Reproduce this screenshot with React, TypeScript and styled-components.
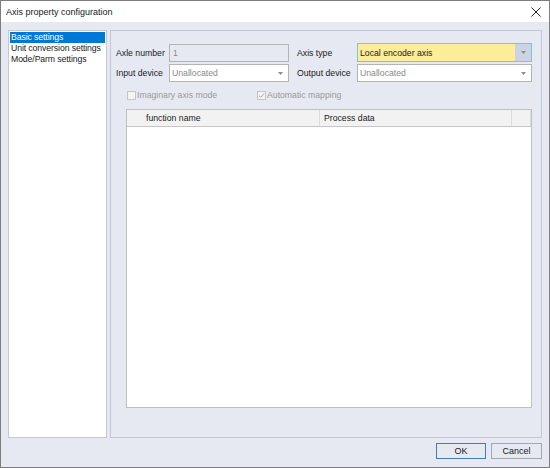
import styled, { createGlobalStyle } from "styled-components"

const Global = createGlobalStyle`
    html, body { margin: 0; padding: 0; background: #ffffff; }
    * { box-sizing: border-box; }
    body {
        font-family: "Liberation Sans", Arial, sans-serif;
        font-size: 8.7px;
        color: #1a1a1a;
    }
`

const Window = styled.div`
    width: 550px;
    height: 468px;
    border: 1px solid #7d7d7d;
    display: flex;
    flex-direction: column;
    background: #e6e9f2;
`

const TitleBar = styled.div`
    height: 21px;
    flex: none;
    background: #ffffff;
    display: flex;
    align-items: center;
    justify-content: space-between;
    padding: 0 7px 0 5px;

    span { font-size: 9px; color: #1a1a1a; }
`

const CloseBtn = styled.button`
    background: none;
    border: none;
    padding: 0;
    width: 12px;
    height: 12px;
    display: flex;
    align-items: center;
    justify-content: center;
    cursor: pointer;
`

const Body = styled.div`
    flex: 1;
    display: flex;
    flex-direction: column;
    padding: 8px 7px 0 7px;
    min-height: 0;
`

const MainRow = styled.div`
    display: flex;
    gap: 3px;
    height: 408px;
`

const NavList = styled.ul`
    width: 99px;
    margin: 0;
    padding: 1px;
    list-style: none;
    background: #ffffff;
    border: 1px solid #c4c8d4;
`

const NavItem = styled.li<{ $active?: boolean }>`
    height: 11px;
    line-height: 11px;
    padding-left: 1px;
    white-space: nowrap;
    letter-spacing: -0.1px;
    background: ${({ $active }) => ($active ? "#0078d7" : "transparent")};
    color: ${({ $active }) => ($active ? "#ffffff" : "#1a1a1a")};
`

const Panel = styled.section`
    flex: 1;
    border: 1px solid #c4c8d4;
    display: flex;
    flex-direction: column;
    padding: 12px 9px 29px 5px;
`

const FormGrid = styled.div`
    display: grid;
    grid-template-columns: 53px 120px 68px 1fr;
    row-gap: 2px;
    align-items: center;
`

const Label = styled.label<{ $second?: boolean }>`
    padding-left: ${({ $second }) => ($second ? "8px" : "0")};
    white-space: nowrap;
`

const TextBox = styled.div`
    height: 18px;
    border: 1px solid #b4b4b4;
    background: #e6e9f2;
    color: #8a8a8a;
    display: flex;
    align-items: center;
    padding-left: 3px;
`

const Select = styled.div<{ $highlight?: boolean }>`
    height: ${({ $highlight }) => ($highlight ? "19px" : "18px")};
    border: 1px solid ${({ $highlight }) => ($highlight ? "#7cc3e0" : "#b4b4b4")};
    background: ${({ $highlight }) => ($highlight ? "#fdec9a" : "#ffffff")};
    color: ${({ $highlight }) => ($highlight ? "#1a1a1a" : "#8a8a8a")};
    display: flex;
    align-items: stretch;

    span {
        flex: 1;
        display: flex;
        align-items: center;
        padding-left: 2px;
    }
`

const Arrow = styled.div<{ $highlight?: boolean }>`
    width: 16px;
    display: flex;
    align-items: center;
    justify-content: center;
    background: ${({ $highlight }) => ($highlight ? "#ccd4e2" : "transparent")};
`

const CheckRow = styled.div`
    display: flex;
    align-items: center;
    height: 12px;
    margin-top: 7px;
    padding-left: 11px;
`

const Check = styled.div<{ $width: number }>`
    width: ${({ $width }) => $width}px;
    display: flex;
    align-items: center;
    gap: 1px;
    color: #9a9a9a;
    white-space: nowrap;
`

const Box = styled.span`
    width: 9px;
    height: 9px;
    border: 1px solid #c6c6c6;
    background: #f4f4f4;
    display: flex;
    align-items: center;
    justify-content: center;
`

const Table = styled.div`
    flex: 1;
    margin: 8px 0 0 10px;
    border: 1px solid #c0c0c0;
    background: #ffffff;
    display: flex;
    flex-direction: column;
`

const HeaderRow = styled.div`
    height: 17px;
    flex: none;
    display: flex;
    background: #f2f2f2;
    border-bottom: 1px solid #c6c6c6;
`

const HeaderCell = styled.div<{ $width?: number; $indent?: number }>`
    width: ${({ $width }) => ($width ? `${$width}px` : "auto")};
    flex: ${({ $width }) => ($width ? "none" : "1")};
    display: flex;
    align-items: center;
    padding-left: ${({ $indent }) => $indent ?? 4}px;
    border-right: 1px solid #dcdcdc;
    white-space: nowrap;
`

const Footer = styled.div`
    display: flex;
    justify-content: flex-end;
    gap: 5px;
    padding-top: 5px;
`

const Button = styled.button<{ $default?: boolean }>`
    width: ${({ $default }) => ($default ? "50px" : "51px")};
    height: 16px;
    padding: 0;
    font-family: inherit;
    font-size: 9px;
    color: #1a1a1a;
    background: #e6e9f2;
    border: 1px solid ${({ $default }) => ($default ? "#3e7fb4" : "#a8a8a8")};
    cursor: pointer;
`

const DownArrow = () => (
    <svg width="5" height="3" viewBox="0 0 5 3">
        <path d="M0 0 H5 L2.5 3 Z" fill="#8c8c8c" />
    </svg>
)

const CheckMark = () => (
    <svg width="7" height="7" viewBox="0 0 7 7">
        <path d="M1 3.6 L2.8 5.3 L6 1.5" fill="none" stroke="#a8a8a8" strokeWidth="1" />
    </svg>
)

export default function App() {
    return (
        <>
            <Global />
            <Window>
                <TitleBar>
                    <span>Axis property configuration</span>
                    <CloseBtn aria-label="Close">
                        <svg width="10" height="10" viewBox="0 0 10 10">
                            <path d="M0.5 0.5 L9.5 9.5 M9.5 0.5 L0.5 9.5" stroke="#222" strokeWidth="1" />
                        </svg>
                    </CloseBtn>
                </TitleBar>
                <Body>
                    <MainRow>
                        <NavList>
                            <NavItem $active>Basic settings</NavItem>
                            <NavItem>Unit conversion settings</NavItem>
                            <NavItem>Mode/Parm settings</NavItem>
                        </NavList>
                        <Panel>
                            <FormGrid>
                                <Label>Axle number</Label>
                                <TextBox>1</TextBox>
                                <Label $second>Axis type</Label>
                                <Select $highlight>
                                    <span>Local encoder axis</span>
                                    <Arrow $highlight><DownArrow /></Arrow>
                                </Select>
                                <Label>Input device</Label>
                                <Select>
                                    <span>Unallocated</span>
                                    <Arrow><DownArrow /></Arrow>
                                </Select>
                                <Label $second>Output device</Label>
                                <Select>
                                    <span>Unallocated</span>
                                    <Arrow><DownArrow /></Arrow>
                                </Select>
                            </FormGrid>
                            <CheckRow>
                                <Check $width={130}>
                                    <Box />
                                    Imaginary axis mode
                                </Check>
                                <Check $width={120}>
                                    <Box><CheckMark /></Box>
                                    Automatic mapping
                                </Check>
                            </CheckRow>
                            <Table>
                                <HeaderRow>
                                    <HeaderCell $width={193} $indent={19}>function name</HeaderCell>
                                    <HeaderCell $width={192}>Process data</HeaderCell>
                                    <HeaderCell />
                                </HeaderRow>
                            </Table>
                        </Panel>
                    </MainRow>
                    <Footer>
                        <Button $default>OK</Button>
                        <Button>Cancel</Button>
                    </Footer>
                </Body>
            </Window>
        </>
    )
}
